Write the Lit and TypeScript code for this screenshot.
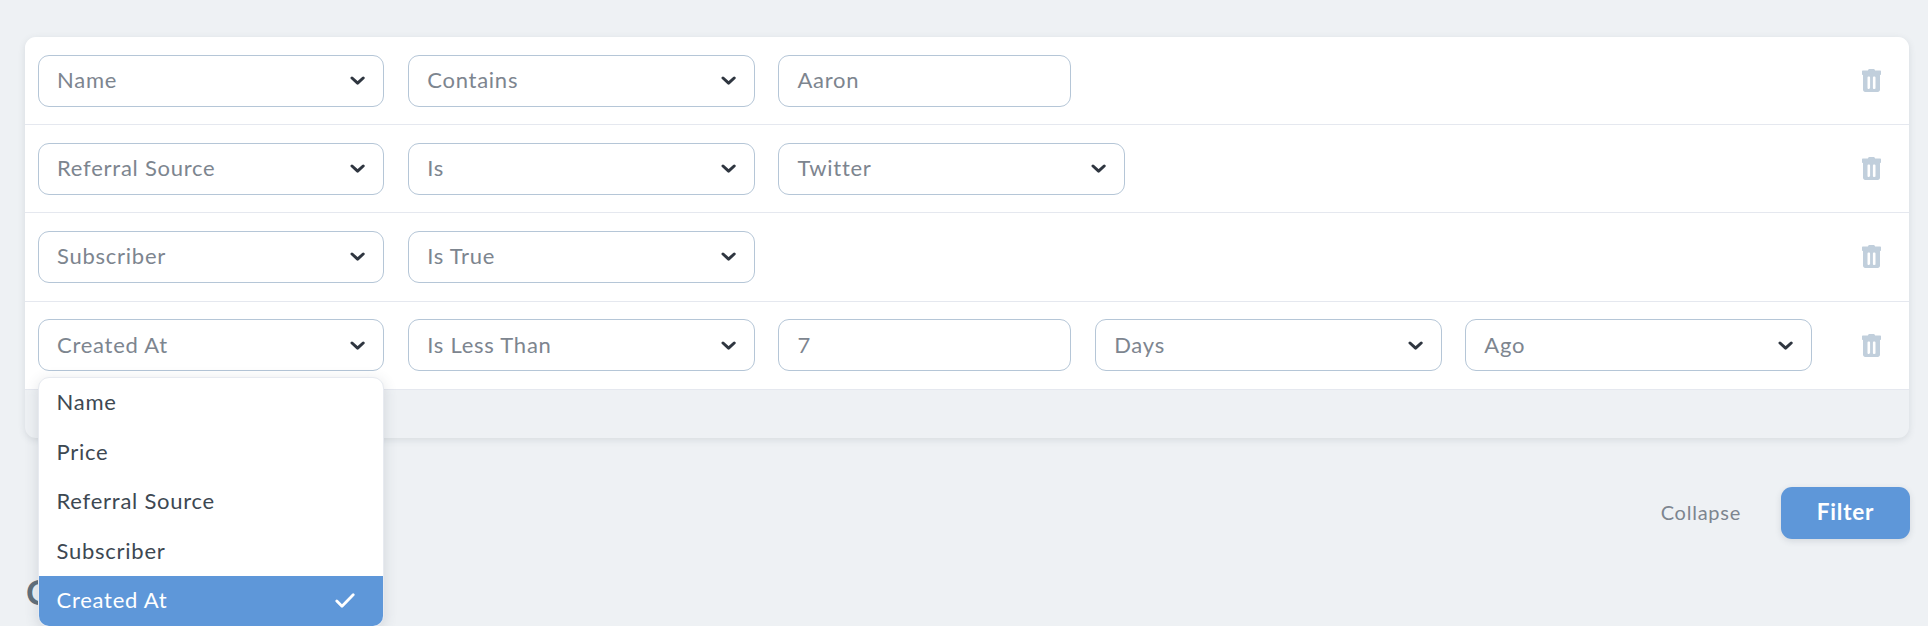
import { LitElement, html, css, svg } from "lit";
import { customElement } from "lit/decorators.js";

type Ctl = { t: "s" | "i"; v: string };

const rows: Ctl[][] = [
  [{ t: "s", v: "Name" }, { t: "s", v: "Contains" }, { t: "i", v: "Aaron" }],
  [{ t: "s", v: "Referral Source" }, { t: "s", v: "Is" }, { t: "s", v: "Twitter" }],
  [{ t: "s", v: "Subscriber" }, { t: "s", v: "Is True" }],
  [
    { t: "s", v: "Created At" },
    { t: "s", v: "Is Less Than" },
    { t: "i", v: "7" },
    { t: "s", v: "Days" },
    { t: "s", v: "Ago" },
  ],
];
const options = ["Name", "Price", "Referral Source", "Subscriber", "Created At"];

const chevron = svg`<path d="M2 2l5.600 5.200L13.200 2" fill="none" stroke="#2f3640" stroke-width="3" stroke-linecap="round" stroke-linejoin="round"/>`;
const trash = svg`<path fill-rule="evenodd" fill="#c1cfdc" d="M7.600 0h3.800c.9 0 1.600.7 1.700 1.600H18c.6 0 1 .4 1 1v2.700c0 .4-.3.7-.7.7h-.3v14.800c0 1.200-1 2.200-2.200 2.200H3.200C2 23 1 22 1 20.800V6H.7C.3 6 0 5.700 0 5.300V2.600c0-.6.4-1 1-1h4.900C6 .7 6.700 0 7.600 0zM6.400 7.500c-.5 0-.9.4-.9.900v10.700c0 .5.400.9.900.9h.8c.5 0 .9-.4.900-.9V8.400c0-.5-.4-.9-.9-.9h-.8zm5.400 0c-.5 0-.9.4-.9.900v10.700c0 .5.400.9.900.9h.8c.5 0 .9-.4.900-.9V8.400c0-.5-.4-.9-.9-.9h-.8z"/>`;

@customElement("app-root")
export class AppRoot extends LitElement {
  static styles = css`
    :host {
      display: block;
      height: 626px;
      overflow: hidden;
      background: #eef1f4;
      font-family: "Lato", "Noto Sans", sans-serif;
      font-size: 22px;
      letter-spacing: 0.75px;
      color: #3d4852;
    }
    .page {
      padding: 37px 19px 0 25px;
    }
    .card {
      border-radius: 11px;
      background: #eef1f4;
      box-shadow: 0 2px 7px rgba(60, 75, 95, 0.13);
    }
    .row {
      height: 88.2px;
      box-sizing: border-box;
      display: flex;
      align-items: center;
      gap: 23.8px;
      padding: 0 28px 0 13px;
      background: #fff;
      border-bottom: 1.5px solid #e5e8ef;
    }
    .row:first-child {
      border-radius: 11px 11px 0 0;
    }
    .ctl {
      position: relative;
      box-sizing: border-box;
      height: 52px;
      flex: none;
      display: flex;
      align-items: center;
      padding: 0 18px;
      border: 1.5px solid #b5c6d7;
      border-radius: 11px;
      color: #7d858f;
      background: #fff;
    }
    .ctl > span {
      margin-top: -2px;
    }
    .select {
      width: 346.4px;
      justify-content: space-between;
    }
    .input {
      width: 293px;
    }
    .chev {
      width: 15px;
      height: 9px;
      flex: none;
    }
    .trash {
      width: 19px;
      height: 23px;
      flex: none;
      margin-left: auto;
    }
    .footer {
      height: 48px;
    }
    .menu {
      position: absolute;
      z-index: 5;
      left: -1.5px;
      top: 56.5px;
      width: 346.4px;
      box-sizing: border-box;
      background: #fff;
      border: 1.5px solid #e7eaf0;
      border-radius: 11px;
      overflow: hidden;
      box-shadow: 0 3px 14px rgba(60, 75, 95, 0.16);
      color: #3d4852;
    }
    .opt {
      height: 49.6px;
      display: flex;
      align-items: center;
      justify-content: space-between;
      padding: 0 28px 0 18px;
    }
    .opt > span {
      margin-top: -2px;
    }
    .opt.sel {
      background: #5e97d9;
      color: #fff;
    }
    .check {
      width: 20px;
      height: 15px;
      flex: none;
    }
    .actions {
      display: flex;
      justify-content: flex-end;
      align-items: center;
      gap: 40px;
      margin: 49px -1px 0 0;
    }
    .collapse {
      color: #7d858f;
      font-size: 20px;
      margin-top: -1px;
    }
    .filter {
      width: 129px;
      height: 52px;
      display: flex;
      align-items: center;
      justify-content: center;
      border-radius: 11px;
      background: #5e97d9;
      color: #fff;
      font-weight: 700;
      font-size: 22.5px;
      letter-spacing: 0.8px;
      box-shadow: 0 2px 6px rgba(60, 75, 95, 0.15);
    }
    .filter > span {
      margin-top: -2px;
    }
    h1 {
      margin: 30px 0 0 1px;
      font-size: 35px;
      line-height: 44px;
      font-weight: 700;
      letter-spacing: 0;
      color: #606f7b;
    }
  `;

  private ctl(c: Ctl, open: boolean) {
    if (c.t === "i") return html`<div class="ctl input"><span>${c.v}</span></div>`;
    return html`<div class="ctl select">
      <span>${c.v}</span>
      <svg class="chev" viewBox="0 0 15 9">${chevron}</svg>
      ${open
        ? html`<div class="menu">
            ${options.map(
              (o) => html`<div class="opt ${o === c.v ? "sel" : ""}">
                <span>${o}</span>
                ${o === c.v
                  ? html`<svg class="check" viewBox="0 0 20 15">
                      <path d="M1.800 8l5.200 5.200L18.200 1.800" fill="none" stroke="#fff" stroke-width="2.800" stroke-linecap="round" stroke-linejoin="round" />
                    </svg>`
                  : ""}
              </div>`
            )}
          </div>`
        : ""}
    </div>`;
  }

  render() {
    return html`<div class="page">
      <div class="card">
        ${rows.map(
          (r, ri) => html`<div class="row">
            ${r.map((c, ci) => this.ctl(c, ri === 3 && ci === 0))}
            <svg class="trash" viewBox="0 0 19 23">${trash}</svg>
          </div>`
        )}
        <div class="footer"></div>
      </div>
      <div class="actions">
        <span class="collapse">Collapse</span>
        <div class="filter"><span>Filter</span></div>
      </div>
      <h1>Customers</h1>
    </div>`;
  }
}
